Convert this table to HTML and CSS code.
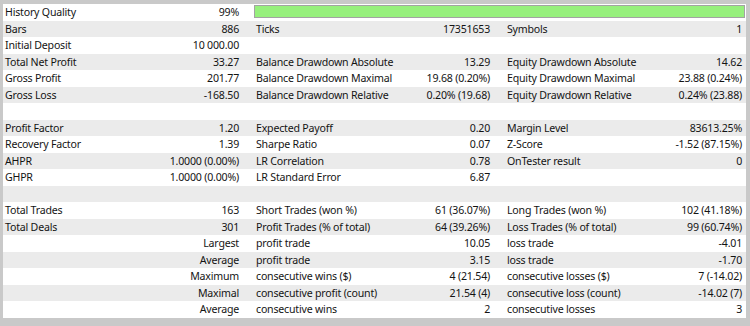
FILE: index.html
```html
<!DOCTYPE html>
<html>
<head>
<meta charset="utf-8">
<link rel="stylesheet" href="styles.css">
</head>
<body>
<div class="report">
  <div class="row">
    <div class="cell"><span>History Quality</span><span>99%</span></div>
    <div class="quality"><div class="fill"></div></div>
  </div>
  <div class="row">
    <div class="cell"><span>Bars</span><span>886</span></div>
    <div class="cell"><span>Ticks</span><span>17351653</span></div>
    <div class="cell last"><span>Symbols</span><span>1</span></div>
  </div>
  <div class="row">
    <div class="cell"><span>Initial Deposit</span><span>10 000.00</span></div>
    <div class="cell"></div>
    <div class="cell last"></div>
  </div>
  <div class="row">
    <div class="cell"><span>Total Net Profit</span><span>33.27</span></div>
    <div class="cell"><span>Balance Drawdown Absolute</span><span>13.29</span></div>
    <div class="cell last"><span>Equity Drawdown Absolute</span><span>14.62</span></div>
  </div>
  <div class="row">
    <div class="cell"><span>Gross Profit</span><span>201.77</span></div>
    <div class="cell"><span>Balance Drawdown Maximal</span><span>19.68 (0.20%)</span></div>
    <div class="cell last"><span>Equity Drawdown Maximal</span><span>23.88 (0.24%)</span></div>
  </div>
  <div class="row">
    <div class="cell"><span>Gross Loss</span><span>-168.50</span></div>
    <div class="cell"><span>Balance Drawdown Relative</span><span>0.20% (19.68)</span></div>
    <div class="cell last"><span>Equity Drawdown Relative</span><span>0.24% (23.88)</span></div>
  </div>
  <div class="row"></div>
  <div class="row">
    <div class="cell"><span>Profit Factor</span><span>1.20</span></div>
    <div class="cell"><span>Expected Payoff</span><span>0.20</span></div>
    <div class="cell last"><span>Margin Level</span><span>83613.25%</span></div>
  </div>
  <div class="row">
    <div class="cell"><span>Recovery Factor</span><span>1.39</span></div>
    <div class="cell"><span>Sharpe Ratio</span><span>0.07</span></div>
    <div class="cell last"><span>Z-Score</span><span>-1.52 (87.15%)</span></div>
  </div>
  <div class="row">
    <div class="cell"><span>AHPR</span><span>1.0000 (0.00%)</span></div>
    <div class="cell"><span>LR Correlation</span><span>0.78</span></div>
    <div class="cell last"><span>OnTester result</span><span>0</span></div>
  </div>
  <div class="row">
    <div class="cell"><span>GHPR</span><span>1.0000 (0.00%)</span></div>
    <div class="cell"><span>LR Standard Error</span><span>6.87</span></div>
    <div class="cell last"></div>
  </div>
  <div class="row"></div>
  <div class="row">
    <div class="cell"><span>Total Trades</span><span>163</span></div>
    <div class="cell"><span>Short Trades (won %)</span><span>61 (36.07%)</span></div>
    <div class="cell last"><span>Long Trades (won %)</span><span>102 (41.18%)</span></div>
  </div>
  <div class="row">
    <div class="cell"><span>Total Deals</span><span>301</span></div>
    <div class="cell"><span>Profit Trades (% of total)</span><span>64 (39.26%)</span></div>
    <div class="cell last"><span>Loss Trades (% of total)</span><span>99 (60.74%)</span></div>
  </div>
  <div class="row">
    <div class="cell"><span></span><span>Largest</span></div>
    <div class="cell"><span>profit trade</span><span>10.05</span></div>
    <div class="cell last"><span>loss trade</span><span>-4.01</span></div>
  </div>
  <div class="row">
    <div class="cell"><span></span><span>Average</span></div>
    <div class="cell"><span>profit trade</span><span>3.15</span></div>
    <div class="cell last"><span>loss trade</span><span>-1.70</span></div>
  </div>
  <div class="row">
    <div class="cell"><span></span><span>Maximum</span></div>
    <div class="cell"><span>consecutive wins ($)</span><span>4 (21.54)</span></div>
    <div class="cell last"><span>consecutive losses ($)</span><span>7 (-14.02)</span></div>
  </div>
  <div class="row">
    <div class="cell"><span></span><span>Maximal</span></div>
    <div class="cell"><span>consecutive profit (count)</span><span>21.54 (4)</span></div>
    <div class="cell last"><span>consecutive loss (count)</span><span>-14.02 (7)</span></div>
  </div>
  <div class="row">
    <div class="cell"><span></span><span>Average</span></div>
    <div class="cell"><span>consecutive wins</span><span>2</span></div>
    <div class="cell last"><span>consecutive losses</span><span>3</span></div>
  </div>
</div>
</body>
</html>
```
FILE: styles.css
```css
html, body {
  margin: 0;
  padding: 0;
  background: #c9c9c9;
}
.report {
  width: 750px;
  height: 326px;
  box-sizing: border-box;
  border-style: solid;
  border-color: #c9c9c9;
  border-width: 4px 4px 9px 3px;
  background: #ffffff;
  font-family: "Noto Sans", "DejaVu Sans", sans-serif;
  font-size: 10.6px;
  letter-spacing: -0.2px;
  color: #141414;
}
.row {
  display: grid;
  grid-template-columns: 251px 251px 1fr;
  height: 16.5px;
  line-height: 16.5px;
  background: #ffffff;
}
.row:nth-child(even) {
  background: #ebebeb;
}
.cell {
  display: flex;
  justify-content: space-between;
  padding: 0 15px 0 2px;
  white-space: nowrap;
}
.cell.last {
  padding-right: 4px;
}
.quality {
  grid-column: 2 / 4;
  align-self: start;
  margin: 1px 1px 0 0;
  height: 13px;
  box-sizing: border-box;
  border: 1px solid #a3a3a3;
  background: #ffffff;
}
.fill {
  height: 100%;
  width: 100%;
  background: #97f07d;
}
```
